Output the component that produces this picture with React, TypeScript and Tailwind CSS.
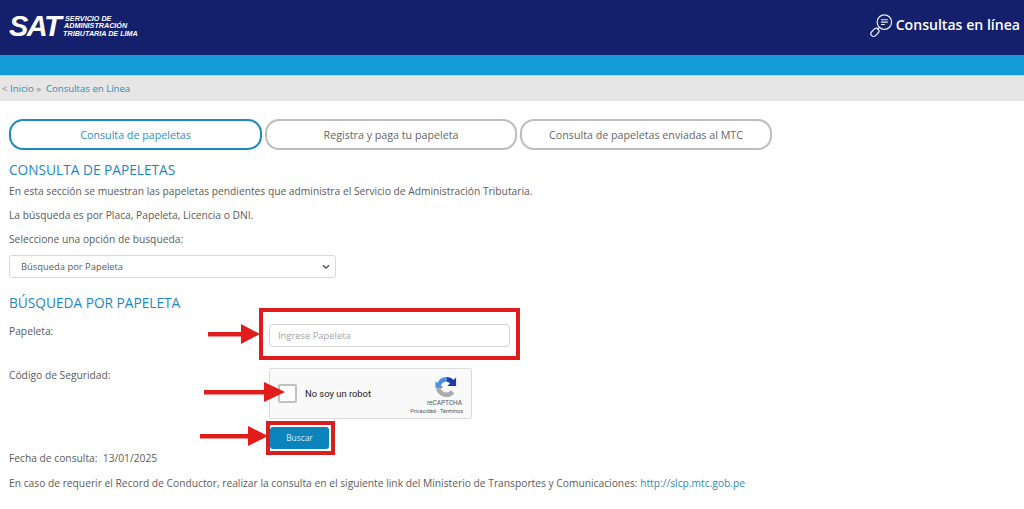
import React from "react";

const Arrow = ({ className, width, head }: { className: string; width: number; head: number }) => (
  <svg className={`absolute ${className}`} width={width} height="20" viewBox={`0 0 ${width} 20`}>
    <rect x="0" y="8" width={width - head + 2} height="4.5" fill="#e21b1b" />
    <polygon points={`${width - head},0 ${width},10 ${width - head},20`} fill="#e21b1b" />
  </svg>
);

const tab = "flex h-[31px] items-center justify-center rounded-[14px] border-2 bg-white pt-[1px] text-[10.7px]";

export default function App() {
  return (
    <div className="relative h-[509px] w-[1024px] overflow-hidden bg-white font-['Open_Sans',sans-serif] text-[10.25px] text-[#5c5c5c]">
      <header className="flex h-[55px] items-center justify-between bg-[#14206b] pl-[9px] pr-[4px] text-white">
        <div className="flex items-center gap-[3px] pb-[3px]">
          <span className="font-['Liberation_Sans',sans-serif] text-[29px] font-bold italic leading-none tracking-[-1.6px]">SAT</span>
          <div className="font-['Liberation_Sans',sans-serif] text-[7.2px] font-bold italic leading-[7.5px]">
            <div className="pl-[2px]">SERVICIO DE</div>
            <div className="pl-[1px]">ADMINISTRACIÓN</div>
            <div>TRIBUTARIA DE LIMA</div>
          </div>
        </div>
        <div className="flex items-center gap-[2px] pb-[4px]">
          <svg width="25" height="25" viewBox="0 0 26 26" fill="none" stroke="#e8ecf6" strokeWidth="1.3">
            <circle cx="16" cy="9.5" r="7.5" />
            <path d="M12.5 7h7M12.5 9.5h7M12.5 12h4" strokeWidth="1.2" />
            <path d="M10.8 15l-2.2 2.2" />
            <rect x="1.4" y="17.4" width="9.5" height="5.6" rx="2.8" transform="rotate(-45 6.1 20.2)" />
          </svg>
          <span className="text-[14.1px] font-semibold leading-none">Consultas en línea</span>
        </div>
      </header>
      <div className="h-[20px] bg-[#149cd8]" />
      <div className="h-px bg-[#a8dcf2]" />
      <nav className="flex h-[25px] items-center bg-[#e6e6e6] pl-[2px] pt-[1px] text-[9.6px] text-[#888]">
        <span>&lt;&nbsp;</span>
        <span className="text-[#2c8dba]">Inicio</span>
        <span>&nbsp;»&nbsp;&nbsp;</span>
        <span className="text-[#2c8dba]">Consultas en Línea</span>
      </nav>

      <main className="px-[9px] pt-[18px]">
        <div className="flex gap-[3px]">
          <div className={`${tab} w-[253px] border-[#1b87c4] text-[#2e90c6]`}>Consulta de papeletas</div>
          <div className={`${tab} w-[252px] border-[#bdbdbd] text-[#666]`}>Registra y paga tu papeleta</div>
          <div className={`${tab} w-[252px] border-[#bdbdbd] text-[#666]`}>Consulta de papeletas enviadas al MTC</div>
        </div>

        <h2 className="mt-[10px] text-[13.7px] leading-[20px] text-[#1b87c4]">CONSULTA DE PAPELETAS</h2>
        <p className="mt-[3px] leading-[16px]">En esta sección se muestran las papeletas pendientes que administra el Servicio de Administración Tributaria.</p>
        <p className="mt-[8px] leading-[16px]">La búsqueda es por Placa, Papeleta, Licencia o DNI.</p>
        <p className="mt-[8px] leading-[16px]">Seleccione una opción de busqueda:</p>

        <div className="mt-[8px] flex h-[23px] w-[327px] items-center justify-between rounded-[3px] border border-[#d9d9d9] pl-[11px] pr-[5px] pt-[1px] text-[9.4px]">
          <span>Búsqueda por Papeleta</span>
          <svg width="8" height="6" viewBox="0 0 8 6" fill="none" stroke="#444" strokeWidth="1.3"><path d="M1 1.2l3 3 3-3" /></svg>
        </div>

        <h2 className="mt-[15px] text-[13.7px] leading-[20px] text-[#1b87c4]">BÚSQUEDA POR PAPELETA</h2>

        <div className="mt-[11px] flex">
          <label className="-mt-[1px] w-[260px] leading-[16px]">Papeleta:</label>
          <div className="flex h-[23px] w-[241px] items-center rounded-[4px] border border-[#d4d4d4] bg-white pl-[8px] pt-[1px] text-[9.4px] text-[#a5a5a5]">Ingrese Papeleta</div>
        </div>

        <div className="mt-[21px] flex">
          <label className="-mt-[1px] w-[260px] leading-[16px]">Código de Seguridad:</label>
          <div className="relative h-[51px] w-[203px] rounded-[2px] border border-[#dcdcdc] bg-[#f9f9f9] font-['Roboto',sans-serif]">
            <div className="flex h-full items-center pl-[8px]">
              <div className="h-[19px] w-[19px] rounded-[2px] border-2 border-[#c1c1c1] bg-white" />
              <span className="ml-[8px] pt-[1px] text-[9.4px] text-[#222]">No soy un robot</span>
            </div>
            <div className="absolute right-[8px] top-[7px] flex flex-col items-end">
              <svg className="mr-[6px]" width="22" height="22" viewBox="0 0 24 24">
                <path d="M13 1a11 11 0 0 1 7.4 3.2L23 1.5V11h-9.5l3-3A6.3 6.3 0 0 0 13 6.3z" fill="#1c3aa9" />
                <path d="M13 1A11 11 0 0 0 2.6 7.6L0.5 5.5V13h8.5L6.4 10.4A6.3 6.3 0 0 1 13 6.3z" fill="#4a90e2" />
                <path d="M1 12.5a11.5 11.5 0 0 0 20 6.5l-3.6-3.4A6.5 6.5 0 0 1 6 12.5z" fill="#ababab" />
              </svg>
              <span className="mr-[1px] mt-[2px] text-[6.5px] leading-[7px] text-[#555]">reCAPTCHA</span>
              <span className="mt-[1px] text-[5.5px] leading-[6px] text-[#555]">Privacidad - Términos</span>
            </div>
          </div>
        </div>

        <div className="ml-[261px] mt-[8px] flex h-[22px] w-[59px] items-center justify-center rounded-[3px] bg-[#0b84bd] text-[8.4px] font-medium text-[#d5f0fb]">Buscar</div>

        <p className="mt-[1px] leading-[16px]">Fecha de consulta:&nbsp; 13/01/2025</p>
        <p className="mt-[9px] leading-[16px]">En caso de requerir el Record de Conductor, realizar la consulta en el siguiente link del Ministerio de Transportes y Comunicaciones: <span className="text-[#2c8dba]">http://slcp.mtc.gob.pe</span></p>
      </main>

      <div className="absolute left-[259px] top-[308px] h-[52px] w-[261px] border-[4px] border-[#e21b1b]" />
      <div className="absolute left-[266px] top-[421px] h-[34px] w-[69px] border-[4px] border-[#d81f1f]" />
      <Arrow className="left-[208px] top-[324px]" width={52} head={19} />
      <Arrow className="left-[204px] top-[382px]" width={81} head={21} />
      <Arrow className="left-[200px] top-[426px]" width={68} head={20} />
    </div>
  );
}
